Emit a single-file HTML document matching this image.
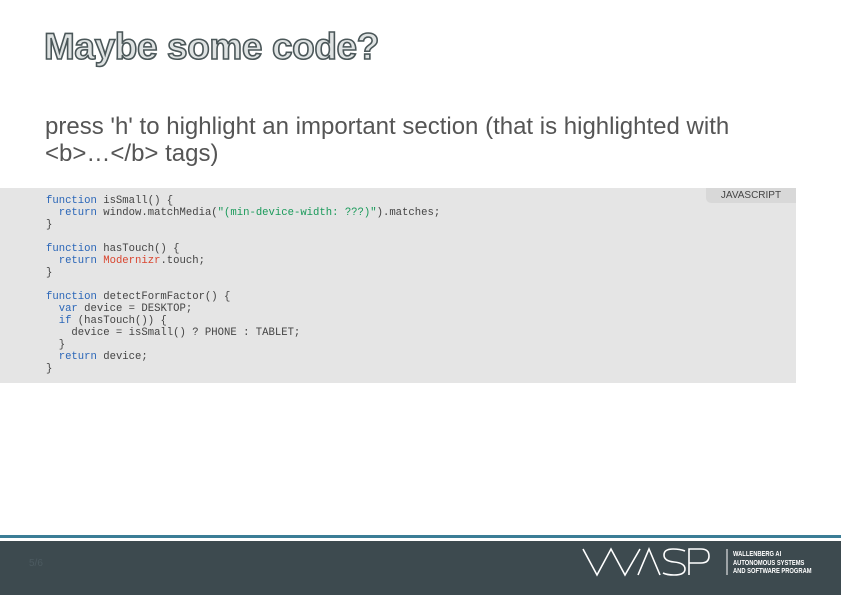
<!DOCTYPE html>
<html><head><meta charset="utf-8"><style>
body{margin:0;width:841px;height:595px;background:#fff;position:relative;overflow:hidden;font-family:"Liberation Sans",sans-serif}
.t{position:absolute;left:44px;top:26px;font-size:37px;font-weight:bold;color:#dfe3e3;-webkit-text-stroke:1.6px #4b5759;letter-spacing:-0.4px}
.s{position:absolute;left:45px;top:113px;font-size:24px;line-height:27px;color:#555;width:745px}
.code{position:absolute;left:0;top:188px;width:796px;height:195px;background:#e5e5e5}
pre{margin:0;position:absolute;left:46px;top:7px;font-family:"Liberation Mono",monospace;font-size:10.6px;line-height:12px;color:#444}
.k{color:#2a66b8}.g{color:#1a9a5a}.r{color:#d9452f}
.lab{position:absolute;right:0;top:0;width:90px;height:15px;background:#d8d8d8;border-bottom-left-radius:5px;font-size:10px;line-height:16px;text-align:center;color:#444}
.bar1{position:absolute;left:0;top:535px;width:841px;height:3px;background:#3b7d96}
.foot{position:absolute;left:0;top:541px;width:841px;height:54px;background:#3d4a4f}
.pg{position:absolute;left:29px;top:17px;font-size:10px;color:#4c5a60}
.lt{position:absolute;left:733px;top:9px;font-size:7.6px;line-height:8.5px;font-weight:bold;color:#fff;transform:scaleX(.76);transform-origin:left}
</style></head><body>
<div class="t">Maybe some code?</div>
<div class="s">press 'h' to highlight an important section (that is highlighted with &lt;b&gt;…&lt;/b&gt; tags)</div>
<div class="code"><div class="lab">JAVASCRIPT</div><pre><span class="k">function</span> isSmall() {
  <span class="k">return</span> window.matchMedia(<span class="g">"(min-device-width: ???)"</span>).matches;
}

<span class="k">function</span> hasTouch() {
  <span class="k">return</span> <span class="r">Modernizr</span>.touch;
}

<span class="k">function</span> detectFormFactor() {
  <span class="k">var</span> device = DESKTOP;
  <span class="k">if</span> (hasTouch()) {
    device = isSmall() ? PHONE : TABLET;
  }
  <span class="k">return</span> device;
}</pre></div>
<div class="bar1"></div>
<div class="foot"><div class="pg">5/6</div>
<svg style="position:absolute;left:0;top:0" width="841" height="54" fill="none" stroke="#fff" stroke-width="1.6">
<polyline points="583,8 597,34 611,8 625,34 640,8"/>
<polyline points="638,34 649,8 660,34"/>
<path d="M685,10 Q680,8 673,8 Q664,8 664,14 Q664,20 674,21 Q685,22 685,28 Q685,34 674,34 Q667,34 663,32"/>
<path d="M689,34 V8 H701 Q709,8 709,15 Q709,22 701,22 H689"/>
<line x1="727" y1="8" x2="727" y2="34" stroke-width="1"/>
</svg>
<div class="lt">WALLENBERG AI<br>AUTONOMOUS SYSTEMS<br>AND SOFTWARE PROGRAM</div>
</div>
</body></html>
